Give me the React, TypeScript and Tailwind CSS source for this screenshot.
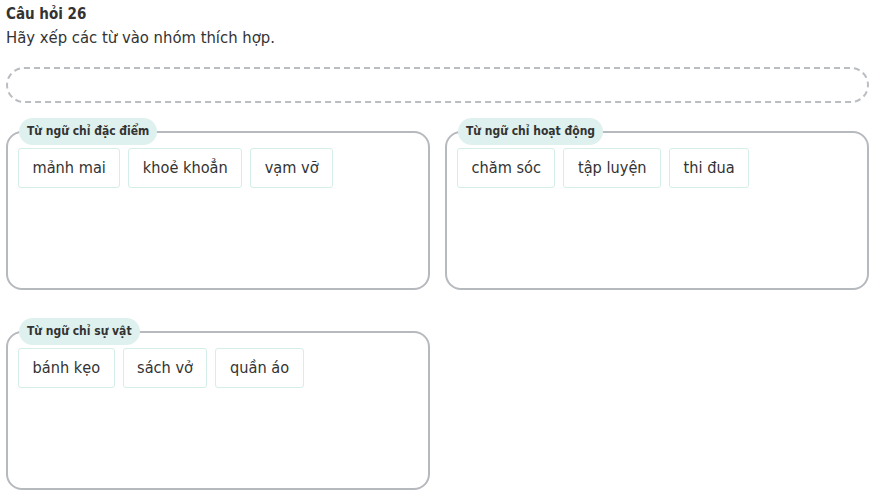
const groups = [
  { title: "Từ ngữ chỉ đặc điểm", words: ["mảnh mai", "khoẻ khoẳn", "vạm vỡ"] },
  { title: "Từ ngữ chỉ hoạt động", words: ["chăm sóc", "tập luyện", "thi đua"] },
  { title: "Từ ngữ chỉ sự vật", words: ["bánh kẹo", "sách vở", "quần áo"] },
];

function Group({ title, words }: { title: string; words: string[] }) {
  return (
    <div className="relative h-[159px] rounded-[16px] border-2 border-[#b6b9be] px-[10px] pt-[15px]">
      <span className="absolute left-[11px] top-[-15px] rounded-full bg-[#dff1ee] px-[8px] leading-[27px] text-[12px] font-bold text-[#333]">
        {title}
      </span>
      <div className="flex flex-wrap gap-[8px]">
        {words.map((w) => (
          <div
            key={w}
            className="h-[40px] rounded-[3px] border border-[#d4eeea] bg-white px-[13.5px] text-[16.2px] leading-[38px] text-[#333]"
          >
            {w}
          </div>
        ))}
      </div>
    </div>
  );
}

export default function App() {
  return (
    <div className="min-h-screen bg-white pl-[6px] pr-[4px] pt-[4px] font-['DejaVu_Sans_Condensed','DejaVu_Sans',sans-serif] font-stretch-condensed text-[#333]">
      {/* Question header */}
      <h1 className="text-[15px] font-bold leading-[20px]">Câu hỏi 26</h1>
      <p className="mt-[4px] text-[16.5px] leading-[20px]">Hãy xếp các từ vào nhóm thích hợp.</p>

      {/* Word pool (empty) */}
      <div className="mt-[19px] h-[36px] rounded-[18px] border-2 border-dashed border-[#babdc2]" />

      {/* Groups */}
      <div className="mt-[28px] grid grid-cols-2 gap-x-[15px] gap-y-[41px]">
        {groups.map((g) => (
          <Group key={g.title} title={g.title} words={g.words} />
        ))}
      </div>
    </div>
  );
}
